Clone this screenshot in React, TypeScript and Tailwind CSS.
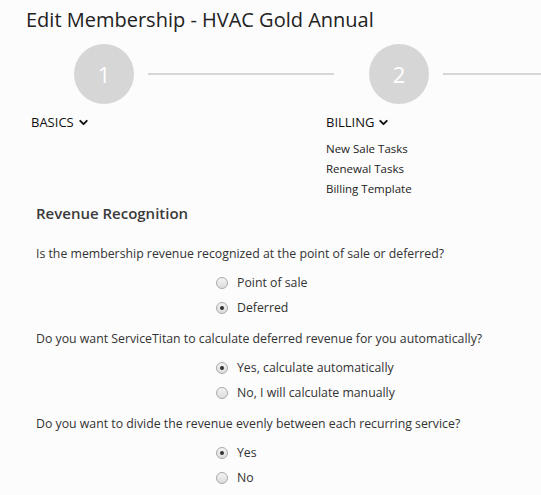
import { ChevronDown } from 'lucide-react'

interface Option {
  label: string
  checked: boolean
}

interface Question {
  text: string
  options: Option[]
}

const questions: Question[] = [
  {
    text: 'Is the membership revenue recognized at the point of sale or deferred?',
    options: [
      { label: 'Point of sale', checked: false },
      { label: 'Deferred', checked: true },
    ],
  },
  {
    text: 'Do you want ServiceTitan to calculate deferred revenue for you automatically?',
    options: [
      { label: 'Yes, calculate automatically', checked: true },
      { label: 'No, I will calculate manually', checked: false },
    ],
  },
  {
    text: 'Do you want to divide the revenue evenly between each recurring service?',
    options: [
      { label: 'Yes', checked: true },
      { label: 'No', checked: false },
    ],
  },
]

function Radio ({ checked }: { checked: boolean }) {
  return (
    <span className="w-[12px] h-[12px] rounded-full border border-[#a9a9a9] bg-gradient-to-b from-[#f4f4f4] to-[#dcdcdc] flex items-center justify-center">
      {checked && <span className="w-[4px] h-[4px] rounded-full bg-[#333]" />}
    </span>
  )
}

function Step ({ num, label, items }: { num: number, label: string, items?: string[] }) {
  return (
    <div className="w-[295px] shrink-0">
      <div className="flex items-center h-[60px]">
        <div className="ml-[43px] w-[60px] h-[60px] rounded-full bg-[#d6d6d6] text-white text-[22px] flex items-center justify-center shrink-0">
          {num}
        </div>
        <div className="ml-[14px] mr-[-8px] h-[2px] flex-1 bg-[#d6d6d6]" />
      </div>
      <div className="mt-[10px] flex items-center text-[13px] text-[#111] leading-[16px]">
        {label}
        <ChevronDown size={13} strokeWidth={3.5} className="ml-[3px] mt-[1px]" />
      </div>
      {items && (
        <div className="mt-[9px] flex flex-col text-[11.5px] text-[#222] leading-[20px]">
          {items.map(item => (
            <span key={item}>{item}</span>
          ))}
        </div>
      )}
    </div>
  )
}

export default function App () {
  return (
    <div className="w-[541px] h-[495px] overflow-hidden bg-[#fcfcfc] text-[#333] font-['Segoe_UI','Open_Sans',sans-serif]">
      <h1 className="pl-[26px] pt-[6px] text-[20px] leading-[28px] text-[#222]">
        Edit Membership - HVAC Gold Annual
      </h1>
      <div className="flex pl-[31px] mt-[10px]">
        <Step num={1} label="BASICS" />
        <Step num={2} label="BILLING" items={['New Sale Tasks', 'Renewal Tasks', 'Billing Template']} />
      </div>
      <div className="pl-[36px]">
        <h2 className="mt-[3px] text-[15px] leading-[22px] font-semibold text-[#3a3a3a]">Revenue Recognition</h2>
        <div className="mt-[21px] flex flex-col gap-[13px]">
          {questions.map(q => (
            <div key={q.text}>
              <p className="text-[12.3px] leading-[18px]">{q.text}</p>
              <div className="mt-[11px] pl-[180px] flex flex-col gap-[7px]">
                {q.options.map(o => (
                  <label key={o.label} className="flex items-center gap-[9px] text-[12.3px] leading-[18px]">
                    <Radio checked={o.checked} />
                    {o.label}
                  </label>
                ))}
              </div>
            </div>
          ))}
        </div>
      </div>
    </div>
  )
}
